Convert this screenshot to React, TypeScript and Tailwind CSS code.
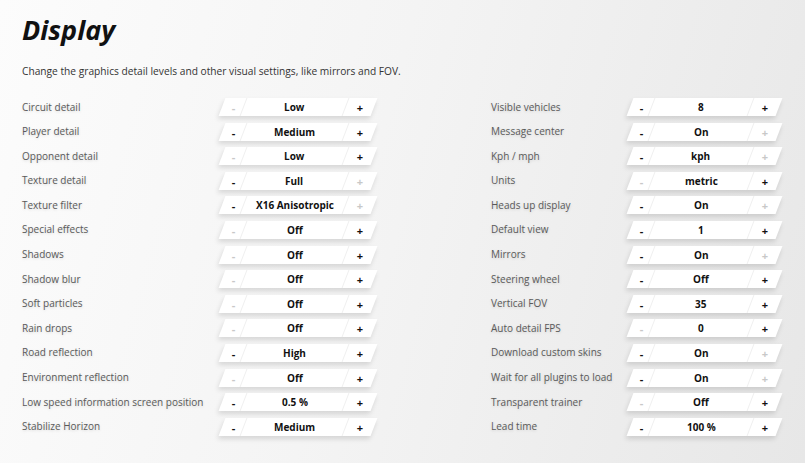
import React from "react";

type Row = { label: string; value: string; minus: boolean; plus: boolean };

const left: Row[] = [
  { label: "Circuit detail", value: "Low", minus: false, plus: true },
  { label: "Player detail", value: "Medium", minus: true, plus: true },
  { label: "Opponent detail", value: "Low", minus: false, plus: true },
  { label: "Texture detail", value: "Full", minus: true, plus: false },
  { label: "Texture filter", value: "X16 Anisotropic", minus: true, plus: false },
  { label: "Special effects", value: "Off", minus: false, plus: true },
  { label: "Shadows", value: "Off", minus: false, plus: true },
  { label: "Shadow blur", value: "Off", minus: false, plus: true },
  { label: "Soft particles", value: "Off", minus: false, plus: true },
  { label: "Rain drops", value: "Off", minus: false, plus: true },
  { label: "Road reflection", value: "High", minus: true, plus: true },
  { label: "Environment reflection", value: "Off", minus: false, plus: true },
  { label: "Low speed information screen position", value: "0.5 %", minus: true, plus: true },
  { label: "Stabilize Horizon", value: "Medium", minus: true, plus: true },
];

const right: Row[] = [
  { label: "Visible vehicles", value: "8", minus: true, plus: true },
  { label: "Message center", value: "On", minus: true, plus: false },
  { label: "Kph / mph", value: "kph", minus: true, plus: false },
  { label: "Units", value: "metric", minus: false, plus: true },
  { label: "Heads up display", value: "On", minus: true, plus: false },
  { label: "Default view", value: "1", minus: true, plus: true },
  { label: "Mirrors", value: "On", minus: true, plus: false },
  { label: "Steering wheel", value: "Off", minus: true, plus: true },
  { label: "Vertical FOV", value: "35", minus: true, plus: true },
  { label: "Auto detail FPS", value: "0", minus: false, plus: true },
  { label: "Download custom skins", value: "On", minus: true, plus: false },
  { label: "Wait for all plugins to load", value: "On", minus: true, plus: false },
  { label: "Transparent trainer", value: "Off", minus: false, plus: true },
  { label: "Lead time", value: "100 %", minus: true, plus: true },
];

function Stepper({ row, wide }: { row: Row; wide: boolean }) {
  return (
    <div className={`h-[18px] ${wide ? "w-[152px]" : "w-[149px]"} -skew-x-[21deg] bg-white shadow-[0_3px_5px_rgba(0,0,0,0.13)] flex items-stretch`}>
      <div className="w-[21px] flex items-center justify-center pl-[2px]">
        <span className={`skew-x-[21deg] text-[11px] font-bold leading-none ${row.minus ? "text-[#111]" : "text-[#c8c8c8]"}`}>-</span>
      </div>
      <div className="flex-1 border-l border-r border-[#efefef] flex items-center justify-center">
        <span className="skew-x-[21deg] text-[10px] font-bold text-[#111] leading-none">{row.value}</span>
      </div>
      <div className="w-[28px] flex items-center justify-center">
        <span className={`skew-x-[21deg] text-[11px] font-bold leading-none ${row.plus ? "text-[#111]" : "text-[#c8c8c8]"}`}>+</span>
      </div>
    </div>
  );
}

function Column({ rows, labelW, wide }: { rows: Row[]; labelW: string; wide: boolean }) {
  return (
    <div className="flex flex-col gap-y-[6.6px]">
      {rows.map((r) => (
        <div key={r.label} className="flex items-center h-[18px]">
          <div className={`${labelW} text-[10px] text-[#5a5a5a] [text-shadow:0_1px_3px_rgba(0,0,0,0.15)] whitespace-nowrap`}>
            {r.label}
          </div>
          <Stepper row={r} wide={wide} />
        </div>
      ))}
    </div>
  );
}

export default function App() {
  return (
    <div
      className="w-[805px] h-[463px] overflow-hidden bg-[linear-gradient(105deg,#fcfcfc_0%,#f4f4f4_45%,#e7e7e7_100%)] pl-[22px] pt-[12px]"
      style={{ fontFamily: '"Open Sans", "Noto Sans", sans-serif' }}
    >
      <h1 className="text-[27px] font-bold italic text-[#111] leading-[36px]">Display</h1>
      <p className="mt-[16px] text-[10.2px] text-[#333] leading-[14px]">
        Change the graphics detail levels and other visual settings, like mirrors and FOV.
      </p>
      <div className="mt-[20px] flex gap-x-[117px]">
        <Column rows={left} labelW="w-[200px]" wide={true} />
        <Column rows={right} labelW="w-[139px]" wide={false} />
      </div>
    </div>
  );
}
